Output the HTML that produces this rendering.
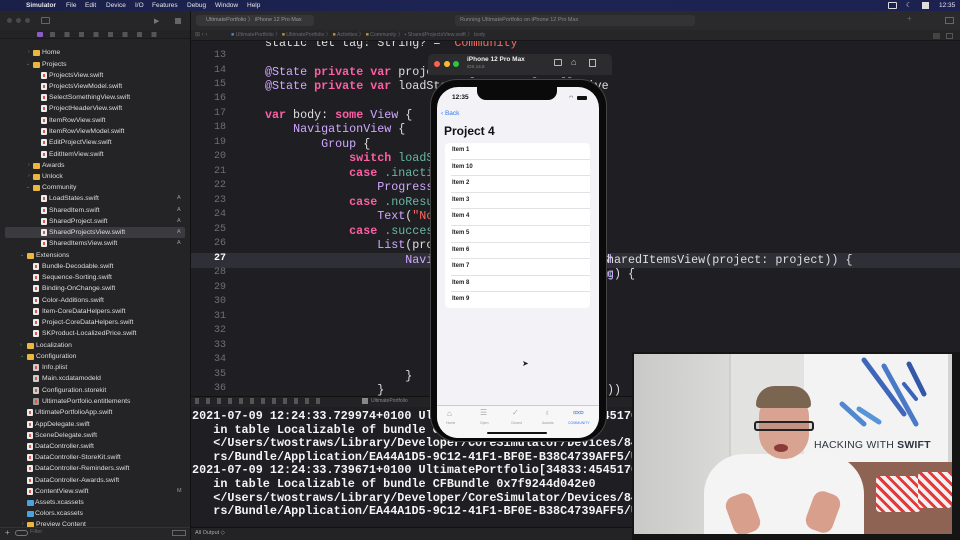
<!DOCTYPE html>
<html><head><meta charset="utf-8"><style>
*{margin:0;padding:0;box-sizing:border-box}
body{width:960px;height:540px;overflow:hidden;background:#1f1f23;position:relative;font-family:"Liberation Sans",sans-serif}
.a{position:absolute}
.menu{left:0;top:0;width:960px;height:11px;background:linear-gradient(90deg,#1a2048,#1d2454 50%,#1c2150);color:#e6e6ee;font-size:6.5px;line-height:11px}
.menu span{position:absolute;top:0}
.sb{left:0;top:11px;width:190px;height:529px;background:#242426}
.row{position:absolute;height:11px;font-size:6.8px;line-height:11px;color:#dedede;white-space:nowrap}
.fo{position:absolute;width:7px;height:5.5px;background:#e8b73c;border-radius:1px;top:3px}
.fi{position:absolute;width:5.5px;height:7px;background:#ececec;border-radius:1px;top:2px}
.fi:after{content:"";position:absolute;left:1.5px;top:2px;width:2.5px;height:3px;background:#e0564d}
.tri{position:absolute;top:0;font-size:5px;color:#888;line-height:11px}
.bd{position:absolute;left:177px;font-size:5.5px;color:#999}
.code{font-family:"Liberation Mono",monospace;font-size:11.7px;line-height:14.48px;color:#dfdfe0;white-space:pre}
.ln{position:absolute;left:196px;width:30px;text-align:right;font-family:"Liberation Mono",monospace;font-size:10px;color:#6e6e74}
.k{color:#fc5fa3;font-weight:bold}.t{color:#d0a8ff}.g{color:#67b7a4}.s{color:#fc6a5d}
.con{font-family:"Liberation Mono",monospace;font-size:11.8px;font-weight:bold;line-height:13.6px;color:#f4f4f4;white-space:pre}
.it{position:absolute;left:452px;font-size:6px;font-weight:bold;color:#222;height:16.6px;line-height:16.6px}
.sep{position:absolute;left:451px;width:139px;height:0.6px;background:#e2e2e6}
</style></head><body>
<div class="a menu">
<span style="left:5px;font-size:8px"></span>
<span style="left:26px;font-weight:bold">Simulator</span><span style="left:66px">File</span><span style="left:85px">Edit</span><span style="left:106px">Device</span><span style="left:135px">I/O</span><span style="left:152px">Features</span><span style="left:187px">Debug</span><span style="left:215px">Window</span><span style="left:247px">Help</span>
<span style="left:888px;top:2px;width:9px;height:7px;border:1px solid #ddd;border-radius:1px"></span>
<span style="left:906px">☾</span><span style="left:922px;top:2px;width:7px;height:7px;background:#ddd"></span>
<span style="left:939px">12:35</span>
</div>
<div class="a sb"></div>
<div class="a" style="left:0;top:11px;width:190px;height:19px;background:#262628"></div>
<div class="a" style="left:7px;top:18px;width:5px;height:5px;border-radius:50%;background:#4a4a4c"></div>
<div class="a" style="left:16px;top:18px;width:5px;height:5px;border-radius:50%;background:#4a4a4c"></div>
<div class="a" style="left:25px;top:18px;width:5px;height:5px;border-radius:50%;background:#4a4a4c"></div>
<div class="a" style="left:41px;top:17px;width:9px;height:7px;border:1px solid #666;border-radius:1px"></div>
<div class="a" style="left:154px;top:17px;color:#777;font-size:7px">▶</div>
<div class="a" style="left:175px;top:18px;width:6px;height:6px;background:#666"></div>
<div class="a" style="left:0;top:30px;width:190px;height:9px;background:#232325;border-bottom:1px solid #1a1a1a"></div>
<div class="a" style="left:37px;top:32px;width:6px;height:5px;background:#8a5cc4;border-radius:1px"></div>
<div class="a" style="left:50px;top:32px;width:110px;height:5px;background:repeating-linear-gradient(90deg,#555 0 5px,transparent 5px 14.5px)"></div>
<div class="a" style="left:5px;top:227px;width:180px;height:11px;background:#3b3a3f;border-radius:2px"></div>

<div class="row" style="top:47px;left:28px"><span class="tri" style="left:0">›</span><span class="fo" style="left:5px"></span><span style="margin-left:14px">Home</span></div>
<div class="row" style="top:59px;left:22px"><span class="tri" style="left:4px">⌄</span><span class="fo" style="left:11px"></span><span style="margin-left:20px">Projects</span></div>
<div class="row" style="top:70px;left:41px"><span class="fi"></span><span style="margin-left:8px">ProjectsView.swift</span></div>
<div class="row" style="top:81px;left:41px"><span class="fi"></span><span style="margin-left:8px">ProjectsViewModel.swift</span></div>
<div class="row" style="top:92px;left:41px"><span class="fi"></span><span style="margin-left:8px">SelectSomethingView.swift</span></div>
<div class="row" style="top:103px;left:41px"><span class="fi"></span><span style="margin-left:8px">ProjectHeaderView.swift</span></div>
<div class="row" style="top:115px;left:41px"><span class="fi"></span><span style="margin-left:8px">ItemRowView.swift</span></div>
<div class="row" style="top:126px;left:41px"><span class="fi"></span><span style="margin-left:8px">ItemRowViewModel.swift</span></div>
<div class="row" style="top:137px;left:41px"><span class="fi"></span><span style="margin-left:8px">EditProjectView.swift</span></div>
<div class="row" style="top:149px;left:41px"><span class="fi"></span><span style="margin-left:8px">EditItemView.swift</span></div>
<div class="row" style="top:160px;left:28px"><span class="tri" style="left:0">›</span><span class="fo" style="left:5px"></span><span style="margin-left:14px">Awards</span></div>
<div class="row" style="top:171px;left:28px"><span class="tri" style="left:0">›</span><span class="fo" style="left:5px"></span><span style="margin-left:14px">Unlock</span></div>
<div class="row" style="top:182px;left:22px"><span class="tri" style="left:4px">⌄</span><span class="fo" style="left:11px"></span><span style="margin-left:20px">Community</span></div>
<div class="row" style="top:193px;left:41px"><span class="fi"></span><span style="margin-left:8px">LoadStates.swift</span></div>
<div class="row" style="top:205px;left:41px"><span class="fi"></span><span style="margin-left:8px">SharedItem.swift</span></div>
<div class="row" style="top:216px;left:41px"><span class="fi"></span><span style="margin-left:8px">SharedProject.swift</span></div>
<div class="row" style="top:227px;left:41px"><span class="fi"></span><span style="margin-left:8px">SharedProjectsView.swift</span></div>
<div class="row" style="top:238px;left:41px"><span class="fi"></span><span style="margin-left:8px">SharedItemsView.swift</span></div>
<div class="bd" style="top:195px">A</div><div class="bd" style="top:207px">A</div><div class="bd" style="top:218px">A</div><div class="bd" style="top:229px">A</div><div class="bd" style="top:240px">A</div>
<div class="row" style="top:250px;left:16px"><span class="tri" style="left:4px">⌄</span><span class="fo" style="left:11px"></span><span style="margin-left:20px">Extensions</span></div>
<div class="row" style="top:261px;left:33px"><span class="fi"></span><span style="margin-left:9px">Bundle-Decodable.swift</span></div>
<div class="row" style="top:272px;left:33px"><span class="fi"></span><span style="margin-left:9px">Sequence-Sorting.swift</span></div>
<div class="row" style="top:283px;left:33px"><span class="fi"></span><span style="margin-left:9px">Binding-OnChange.swift</span></div>
<div class="row" style="top:295px;left:33px"><span class="fi"></span><span style="margin-left:9px">Color-Additions.swift</span></div>
<div class="row" style="top:306px;left:33px"><span class="fi"></span><span style="margin-left:9px">Item-CoreDataHelpers.swift</span></div>
<div class="row" style="top:317px;left:33px"><span class="fi"></span><span style="margin-left:9px">Project-CoreDataHelpers.swift</span></div>
<div class="row" style="top:328px;left:33px"><span class="fi"></span><span style="margin-left:9px">SKProduct-LocalizedPrice.swift</span></div>
<div class="row" style="top:340px;left:16px"><span class="tri" style="left:4px">›</span><span class="fo" style="left:11px"></span><span style="margin-left:20px">Localization</span></div>
<div class="row" style="top:351px;left:16px"><span class="tri" style="left:4px">⌄</span><span class="fo" style="left:11px"></span><span style="margin-left:20px">Configuration</span></div>
<div class="row" style="top:362px;left:33px"><span class="fi" style="background:#ccc"></span><span style="margin-left:9px">Info.plist</span></div>
<div class="row" style="top:373px;left:33px"><span class="fi" style="background:#ccc"></span><span style="margin-left:9px">Main.xcdatamodeld</span></div>
<div class="row" style="top:385px;left:33px"><span class="fi" style="background:#ccc"></span><span style="margin-left:9px">Configuration.storekit</span></div>
<div class="row" style="top:396px;left:33px"><span class="fi" style="background:#999"></span><span style="margin-left:9px">UltimatePortfolio.entitlements</span></div>
<div class="row" style="top:407px;left:27px"><span class="fi"></span><span style="margin-left:8px">UltimatePortfolioApp.swift</span></div>
<div class="row" style="top:419px;left:27px"><span class="fi"></span><span style="margin-left:8px">AppDelegate.swift</span></div>
<div class="row" style="top:430px;left:27px"><span class="fi"></span><span style="margin-left:8px">SceneDelegate.swift</span></div>
<div class="row" style="top:441px;left:27px"><span class="fi"></span><span style="margin-left:8px">DataController.swift</span></div>
<div class="row" style="top:452px;left:27px"><span class="fi"></span><span style="margin-left:8px">DataController-StoreKit.swift</span></div>
<div class="row" style="top:463px;left:27px"><span class="fi"></span><span style="margin-left:8px">DataController-Reminders.swift</span></div>
<div class="row" style="top:475px;left:27px"><span class="fi"></span><span style="margin-left:8px">DataController-Awards.swift</span></div>
<div class="row" style="top:486px;left:27px"><span class="fi"></span><span style="margin-left:8px">ContentView.swift</span></div>
<div class="bd" style="top:488px">M</div>
<div class="row" style="top:497px;left:27px"><span class="fo" style="background:#4aa3df;height:6px;top:2.5px"></span><span style="margin-left:8px">Assets.xcassets</span></div>
<div class="row" style="top:508px;left:27px"><span class="fo" style="background:#4aa3df;height:6px;top:2.5px"></span><span style="margin-left:8px">Colors.xcassets</span></div>
<div class="row" style="top:519px;left:22px"><span class="tri" style="left:0">›</span><span class="fo" style="left:5px"></span><span style="margin-left:14px">Preview Content</span></div>
<div class="a" style="left:0;top:527px;width:190px;height:13px;background:#262628;border-top:1px solid #333"></div>
<div class="a" style="left:5px;top:528px;color:#aaa;font-size:8px">+</div>
<div class="a" style="left:15px;top:530px;width:13px;height:6px;border:1px solid #777;border-radius:3px"></div>
<div class="a" style="left:30px;top:529px;color:#666;font-size:5.5px">Filter</div>
<div class="a" style="left:172px;top:530px;width:14px;height:6px;border:1px solid #666"></div>
<div class="a" style="left:190px;top:11px;width:1px;height:529px;background:#111"></div>

<!-- code -->
<div class="a" style="left:191px;top:253px;width:769px;height:14.5px;background:#2f2f37"></div>
<div class="a" style="left:191px;top:36px;width:421px;height:360px;overflow:hidden">
<div class="a code" style="left:74px;top:0px">static let tag: String? = <span class="s">"Community"</span></div>
<div class="a code" style="left:74px;top:28.5px"><span class="t">@State</span> <span class="k">private var</span> projects: [<span class="t">CKRecord</span>] = []
<span class="t">@State</span> <span class="k">private var</span> loadState = <span class="t">LoadState</span>.inactive

<span class="k">var</span> body: <span class="k">some</span> <span class="t">View</span> {
    <span class="t">NavigationView</span> {
        <span class="t">Group</span> {
            <span class="k">switch</span> <span class="g">loadState</span> {
            <span class="k">case</span> <span class="g">.inactive</span>, <span class="g">.loading</span>:
                <span class="t">ProgressView</span>()
            <span class="k">case</span> <span class="g">.noResults</span>:
                <span class="t">Text</span>(<span class="s">"No results"</span>)
            <span class="k">case</span> <span class="g">.success</span>:
                <span class="t">List</span>(projects) { project <span class="k">in</span>
                    <span class="t">NavigationLink</span>(destination: <span class="t">SharedItemsView</span>(project: project)) {
                        <span class="t">VStack</span>(alignment: <span class="g">.leading</span>) {






                    }
                }
                <span class="g">.listStyle</span>(<span class="t">InsetGroupedListStyle</span>())</div>
</div>
<div class="a" style="left:191px;top:30px;width:769px;height:11px;background:#262628;border-bottom:1px solid #161616"></div>
<div class="a" style="left:195px;top:31px;color:#666;font-size:6px">⊞ ‹ ›</div>
<div class="a" style="left:231px;top:31px;color:#6a6a70;font-size:5.2px;white-space:nowrap"><span style="color:#4a7fd6">■</span> UltimatePortfolio 〉 <span style="color:#b89030">■</span> UltimatePortfolio 〉 <span style="color:#b89030">■</span> Activities 〉 <span style="color:#b89030">■</span> Community 〉 ▪ SharedProjectsView.swift 〉 body</div>
<div class="a" style="left:933px;top:33px;width:7px;height:6px;background:#444"></div>
<div class="a" style="left:946px;top:33px;width:7px;height:6px;border:1px solid #555"></div>
<div class="a" style="left:191px;top:11px;width:769px;height:19px;background:#2a2a2c"></div>
<div class="a" style="left:196px;top:15px;width:118px;height:11px;background:#363638;border-radius:3px;color:#999;font-size:5.5px;line-height:11px;padding-left:10px">UltimatePortfolio 〉 iPhone 12 Pro Max</div>
<div class="a" style="left:455px;top:15px;width:240px;height:11px;background:#333335;border-radius:3px;color:#888;font-size:5.5px;line-height:11px;padding-left:5px">Running UltimatePortfolio on iPhone 12 Pro Max</div>
<div class="a" style="left:907px;top:14px;color:#666;font-size:8px">+</div>
<div class="a" style="left:945px;top:17px;width:9px;height:7px;border:1px solid #666"></div>

<div class="a" style="left:0;top:43px">
<div class="ln" style="top:7px">13</div><div class="ln" style="top:21.5px">14</div><div class="ln" style="top:36px">15</div><div class="ln" style="top:50.4px">16</div><div class="ln" style="top:64.9px">17</div><div class="ln" style="top:79.4px">18</div><div class="ln" style="top:93.9px">19</div><div class="ln" style="top:108.4px">20</div><div class="ln" style="top:122.8px">21</div><div class="ln" style="top:137.3px">22</div><div class="ln" style="top:151.8px">23</div><div class="ln" style="top:166.3px">24</div><div class="ln" style="top:180.8px">25</div><div class="ln" style="top:195.2px">26</div><div class="ln" style="top:209.7px;color:#fff;font-weight:bold">27</div><div class="ln" style="top:224.2px">28</div><div class="ln" style="top:238.7px">29</div><div class="ln" style="top:253.1px">30</div><div class="ln" style="top:267.6px">31</div><div class="ln" style="top:282.1px">32</div><div class="ln" style="top:296.6px">33</div><div class="ln" style="top:311.1px">34</div><div class="ln" style="top:325.5px">35</div><div class="ln" style="top:340px">36</div>
</div>
<div class="a code" style="left:607px;top:252.5px">haredItemsView(project: project)) {</div>
<div class="a code" style="left:607px;top:267px;color:#d0a8ff">g<span style="color:#dfdfe0">) {</span></div>
<div class="a code" style="left:607px;top:383px">))</div>

<!-- console -->
<div class="a" style="left:191px;top:396px;width:769px;height:11px;background:#232325;border-top:1px solid #111"></div>
<div class="a" style="left:195px;top:398px;width:130px;height:6px;background:repeating-linear-gradient(90deg,#555 0 4px,transparent 4px 11px)"></div>
<div class="a" style="left:362px;top:398px;width:6px;height:6px;background:#888"></div>
<div class="a" style="left:371px;top:398px;color:#888;font-size:5px">UltimatePortfolio</div>
<div class="a" style="left:191px;top:407px;width:769px;height:119px;background:#1f1f23"></div>
<div class="a con" style="left:192px;top:410px">2021-07-09 12:24:33.729974+0100 UltimatePortfolio[34833:4545176]
   in table Localizable of bundle CFBundle 0x7f9244d042e0
   &lt;/Users/twostraws/Library/Developer/CoreSimulator/Devices/848
   rs/Bundle/Application/EA44A1D5-9C12-41F1-BF0E-B38C4739AFF5/Ul
2021-07-09 12:24:33.739671+0100 UltimatePortfolio[34833:4545176]
   in table Localizable of bundle CFBundle 0x7f9244d042e0
   &lt;/Users/twostraws/Library/Developer/CoreSimulator/Devices/848
   rs/Bundle/Application/EA44A1D5-9C12-41F1-BF0E-B38C4739AFF5/Ul</div>
<div class="a" style="left:191px;top:527px;width:769px;height:13px;background:#232325;border-top:1px solid #111"></div>
<div class="a" style="left:195px;top:530px;color:#aaa;font-size:5.5px">All Output ◇</div>

<!-- simulator -->
<div class="a" style="left:428px;top:54px;width:184px;height:21px;background:#2c2c2e;border-radius:5px 5px 0 0"></div>
<div class="a" style="left:434px;top:61px;width:6px;height:6px;border-radius:50%;background:#fe5f57"></div>
<div class="a" style="left:444px;top:61px;width:6px;height:6px;border-radius:50%;background:#febc2e"></div>
<div class="a" style="left:453px;top:61px;width:6px;height:6px;border-radius:50%;background:#28c840"></div>
<div class="a" style="left:467px;top:56px;color:#eee;font-size:6.5px;font-weight:bold">iPhone 12 Pro Max</div>
<div class="a" style="left:467px;top:64px;color:#888;font-size:4.5px">iOS 14.5</div>
<div class="a" style="left:554px;top:59px;width:8px;height:7px;border:1px solid #bbb;border-radius:1px"></div>
<div class="a" style="left:571px;top:57px;color:#ccc;font-size:9px">⌂</div>
<div class="a" style="left:589px;top:59px;width:7px;height:8px;border:1px solid #bbb"></div>
<div class="a" style="left:428px;top:75px;width:184px;height:2px;background:#1f1f23"></div>
<div class="a" style="left:430px;top:79px;width:177px;height:363px;background:#0a0a0a;border-radius:27px;border:1px solid #444"></div>
<div class="a" style="left:437px;top:87px;width:162px;height:351px;background:#f2f2f7;border-radius:21px;overflow:hidden">
 <div class="a" style="left:40px;top:0;width:80px;height:13px;background:#0a0a0a;border-radius:0 0 9px 9px"></div>
 <div class="a" style="left:15px;top:7px;font-size:6.5px;font-weight:bold;color:#111">12:35</div>
 <div class="a" style="left:132px;top:8px;font-size:5px;color:#111">◠</div>
 <div class="a" style="left:140px;top:9px;width:10px;height:4px;background:#111;border-radius:1px"></div>
 <div class="a" style="left:4px;top:23px;font-size:6.5px;color:#3478f6">‹ Back</div>
 <div class="a" style="left:7px;top:37px;font-size:12px;font-weight:bold;color:#111">Project 4</div>
 <div class="a" style="left:8px;top:56px;width:145px;height:165px;background:#fff;border-radius:4px"></div>
 <div class="a" style="left:0;top:318px;width:162px;height:33px;background:#f7f7f7;border-top:0.6px solid #ccc"></div>
 <div class="a" style="left:10px;top:322px;font-size:8px;color:#999">⌂</div>
 <div class="a" style="left:43px;top:321px;font-size:8px;color:#aaa">☰</div>
 <div class="a" style="left:75px;top:321px;font-size:8px;color:#aaa">✓</div>
 <div class="a" style="left:107px;top:321px;font-size:8px;color:#aaa">♁</div>
 <div class="a" style="left:136px;top:323px;font-size:5.5px;color:#3478f6;letter-spacing:-.5px">ꝏꝏ</div>
 <div class="a" style="left:9px;top:334px;font-size:3.5px;color:#999">Home</div>
 <div class="a" style="left:43px;top:334px;font-size:3.5px;color:#999">Open</div>
 <div class="a" style="left:74px;top:334px;font-size:3.5px;color:#999">Closed</div>
 <div class="a" style="left:105px;top:334px;font-size:3.5px;color:#999">Awards</div>
 <div class="a" style="left:131px;top:334px;font-size:3.5px;color:#3478f6">COMMUNITY</div>
 <div class="a" style="left:50px;top:345px;width:60px;height:2px;background:#111;border-radius:1px"></div>
</div>
<div class="it" style="top:142px">Item 1</div><div class="sep" style="top:158.6px"></div>
<div class="it" style="top:158.6px">Item 10</div><div class="sep" style="top:175.2px"></div>
<div class="it" style="top:175.2px">Item 2</div><div class="sep" style="top:191.8px"></div>
<div class="it" style="top:191.8px">Item 3</div><div class="sep" style="top:208.4px"></div>
<div class="it" style="top:208.4px">Item 4</div><div class="sep" style="top:225px"></div>
<div class="it" style="top:225px">Item 5</div><div class="sep" style="top:241.6px"></div>
<div class="it" style="top:241.6px">Item 6</div><div class="sep" style="top:258.2px"></div>
<div class="it" style="top:258.2px">Item 7</div><div class="sep" style="top:274.8px"></div>
<div class="it" style="top:274.8px">Item 8</div><div class="sep" style="top:291.4px"></div>
<div class="it" style="top:291.4px">Item 9</div>
<div class="a" style="left:522px;top:359px;font-size:8px;color:#222">➤</div>

<!-- video -->
<div class="a" style="left:632px;top:352px;width:328px;height:188px;background:#151515"></div>
<div class="a" style="left:634px;top:354px;width:318px;height:180px;background:#d4d4d2;overflow:hidden">
 <div class="a" style="left:0;top:0;width:95px;height:180px;background:linear-gradient(90deg,#c9c9c7,#dadad8)"></div>
 <div class="a" style="left:95px;top:0;width:75px;height:180px;background:#e2e2e0;border-left:2px solid #cfcfcd"></div>
 <div class="a" style="left:170px;top:0;width:144px;height:108px;background:#f3f3f3"></div>
 <svg class="a" style="left:200px;top:0" width="110" height="80"><g stroke-linecap="round" fill="none"><path d="M30 6 L70 60" stroke="#3f66b8" stroke-width="5"/><path d="M50 12 L82 70" stroke="#4a79c8" stroke-width="5"/><path d="M75 10 L90 40" stroke="#3358a8" stroke-width="5"/><path d="M8 50 L30 70" stroke="#4f88d0" stroke-width="5"/><path d="M25 55 L45 68" stroke="#5894d8" stroke-width="5"/><path d="M70 30 L82 45" stroke="#3a64b8" stroke-width="4"/></g></svg>
 <div class="a" style="left:180px;top:85px;font-size:10.5px;color:#2d3440;white-space:nowrap;letter-spacing:.2px">HACKING WITH <b>SWIFT</b></div>
 <div class="a" style="left:185px;top:108px;width:133px;height:72px;background:#8f6353"></div>
 <div class="a" style="left:242px;top:122px;width:45px;height:36px;border-radius:4px;background:repeating-linear-gradient(45deg,#f2f0f0 0 4px,#e03a3a 4px 7px)"></div>
 <div class="a" style="left:284px;top:118px;width:34px;height:36px;background:repeating-linear-gradient(45deg,#f2f0f0 0 4px,#e03a3a 4px 7px);border-radius:4px"></div>
 <div class="a" style="left:70px;top:100px;width:160px;height:90px;background:#f4f4f4;border-radius:40px 40px 0 0"></div>
 <div class="a" style="left:125px;top:40px;width:50px;height:65px;background:#d9a391;border-radius:22px 22px 25px 25px"></div>
 <div class="a" style="left:122px;top:32px;width:55px;height:22px;background:#7a6550;border-radius:25px 25px 5px 5px"></div>
 <div class="a" style="left:120px;top:67px;width:60px;height:10px;border:2px solid #222;border-radius:3px;background:rgba(0,0,0,.1)"></div>
 <div class="a" style="left:140px;top:90px;width:14px;height:8px;background:#8a3a38;border-radius:50%"></div>
 <div class="a" style="left:95px;top:140px;width:28px;height:40px;background:#d8a08c;border-radius:10px;transform:rotate(-20deg)"></div>
 <div class="a" style="left:175px;top:138px;width:28px;height:40px;background:#d8a08c;border-radius:10px;transform:rotate(20deg)"></div>
</div>
</body></html>
